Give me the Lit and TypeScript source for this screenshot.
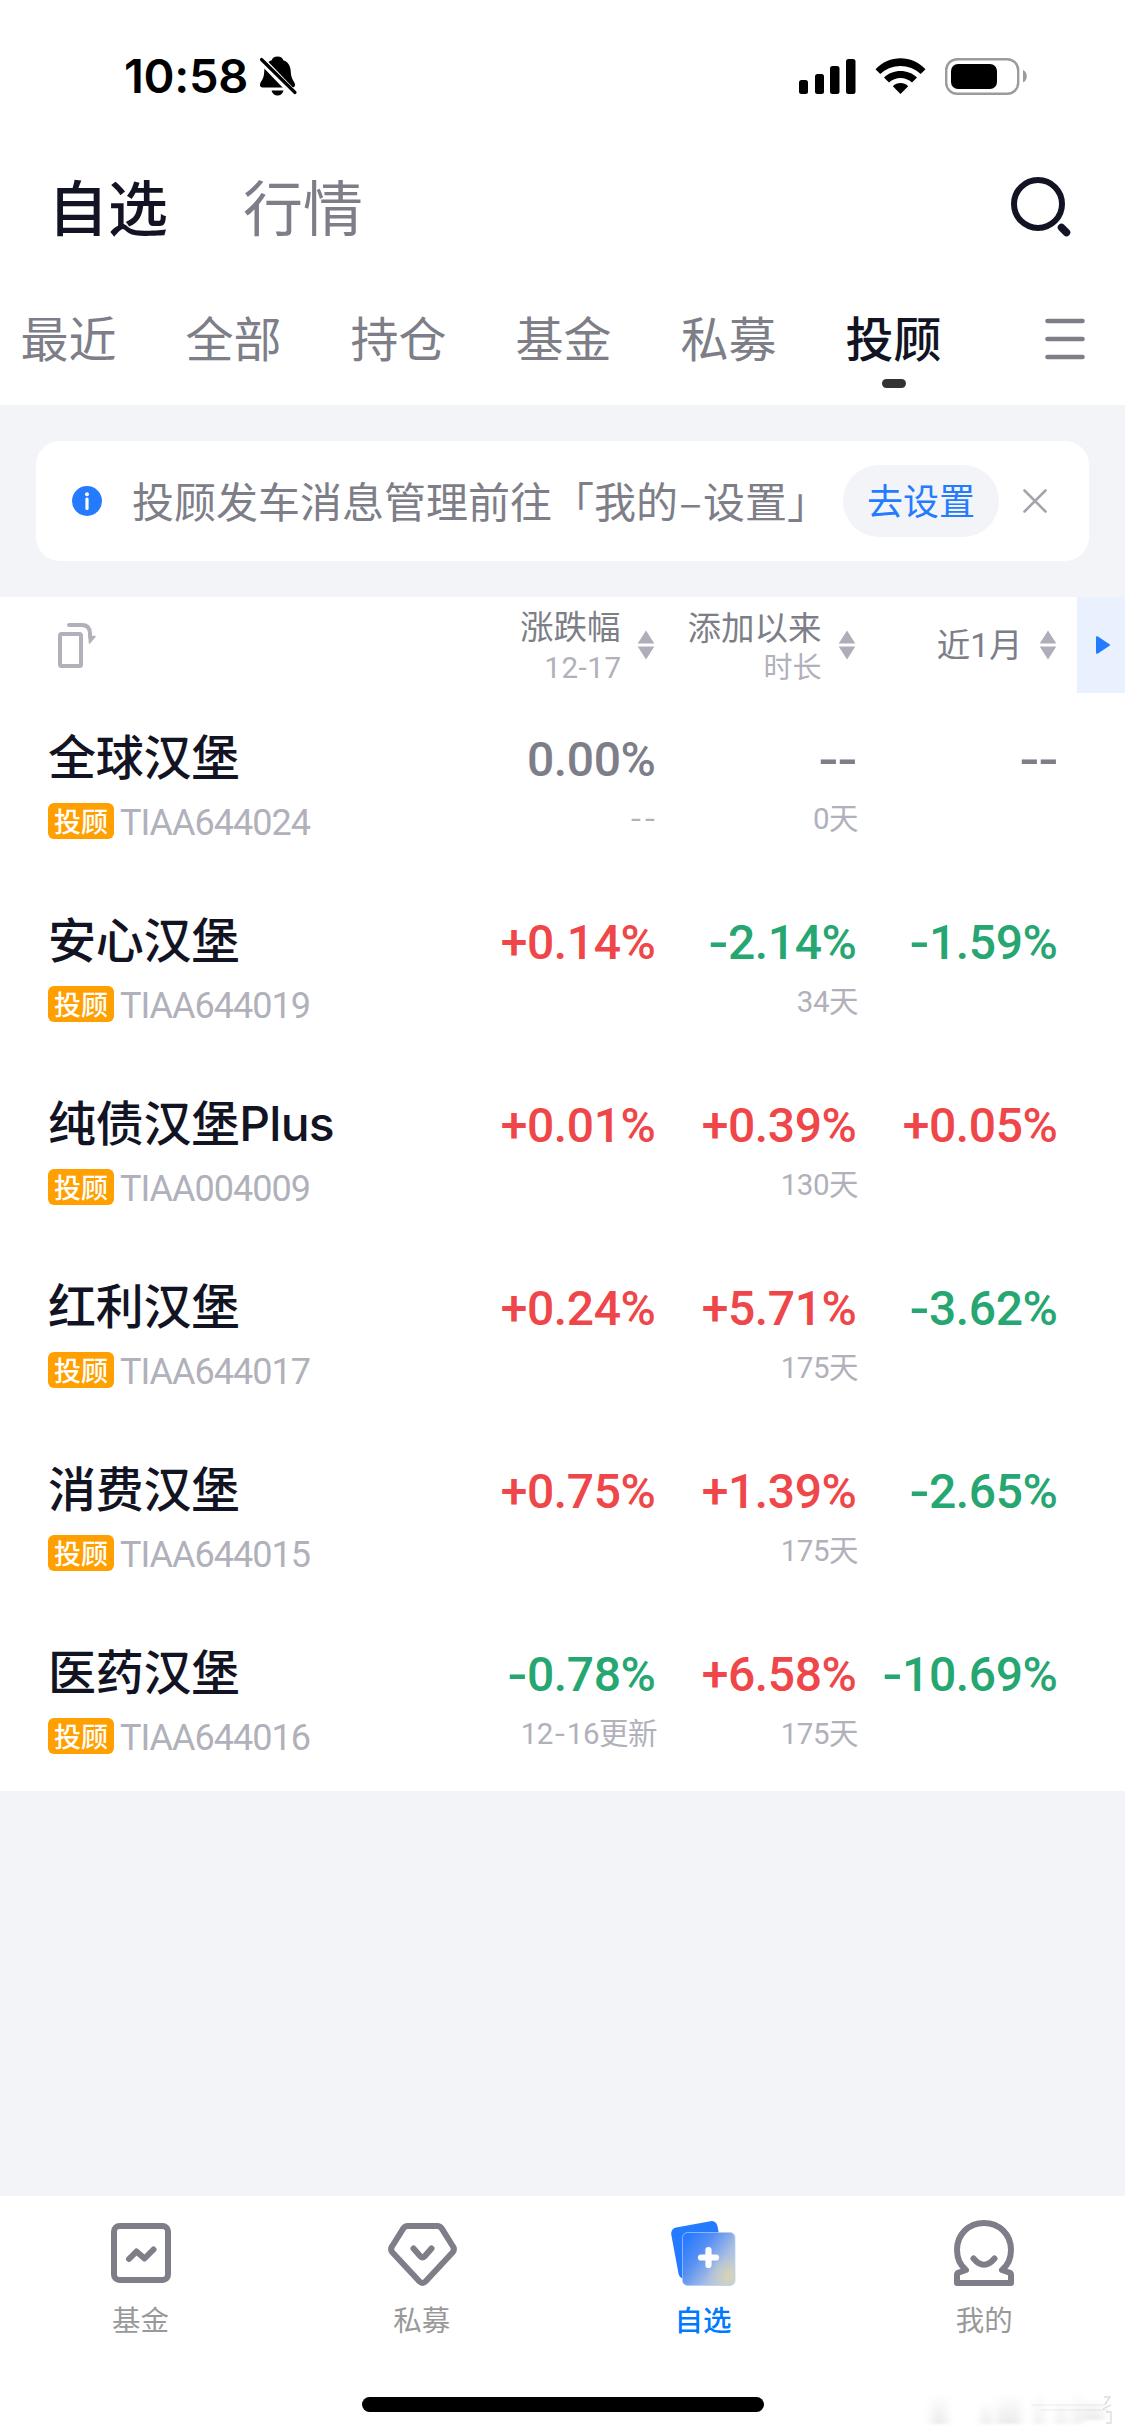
import { LitElement, html, css } from "lit";
import { customElement, property } from "lit/decorators.js";

type Tone = "flat" | "up" | "down";
interface Cell { value: string; tone: Tone; note: string; }
interface Fund { name: string; code: string; cells: Cell[]; }

const cell = (value: string, note = ""): Cell => ({
  value,
  note,
  tone: value.startsWith("+") ? "up" : /^-\d/.test(value) ? "down" : "flat",
});

const FUNDS: Fund[] = [
  { name: "全球汉堡", code: "TIAA644024", cells: [cell("0.00%", "--"), cell("--", "0天"), cell("--")] },
  { name: "安心汉堡", code: "TIAA644019", cells: [cell("+0.14%"), cell("-2.14%", "34天"), cell("-1.59%")] },
  { name: "纯债汉堡Plus", code: "TIAA004009", cells: [cell("+0.01%"), cell("+0.39%", "130天"), cell("+0.05%")] },
  { name: "红利汉堡", code: "TIAA644017", cells: [cell("+0.24%"), cell("+5.71%", "175天"), cell("-3.62%")] },
  { name: "消费汉堡", code: "TIAA644015", cells: [cell("+0.75%"), cell("+1.39%", "175天"), cell("-2.65%")] },
  { name: "医药汉堡", code: "TIAA644016", cells: [cell("-0.78%", "12-16更新"), cell("+6.58%", "175天"), cell("-10.69%")] },
];

// Hyphens get their own span so they can be drawn wider than the font's own.
const figures = (text: string) =>
  text.split(/(-)/).filter(Boolean).map((part) => (part === "-" ? html`<span class="hy">-</span>` : part));

@customElement("status-bar")
class StatusBar extends LitElement {
  static styles = css`
    :host { display: flex; height: 150px; box-sizing: border-box; padding: 2px 97px 0 124px; align-items: center; }
    .time { font: 600 47px/60px Inter, "Liberation Sans", sans-serif; letter-spacing: -0.3px; color: #000; width: 134px; white-space: nowrap; }
    svg { display: block; }
    .right { margin-left: auto; display: flex; gap: 19px; }
  `;
  render() {
    return html`
      <div class="time">10:58</div>
      <svg width="42" height="44" viewBox="258 55 42 44">
        <path d="M277.500 57.500c-3.200 0-5.200 1.500-5.800 3.700-5.300 2-7.200 6-7.500 11.800-.3 8-4.200 9.500-4.200 13 0 1.500 1 2.500 2.700 2.500h29.600c1.700 0 2.700-1 2.700-2.500 0-3.500-3.900-5-4.200-13-.3-5.800-2.200-9.800-7.500-11.800-.6-2.200-2.600-3.700-5.800-3.700z" fill="#000"/>
        <path d="M271.500 91.500h12c-1 3.300-3 5-6 5s-5-1.700-6-5z" fill="#000"/>
        <path d="M258 57.500L296 97" stroke="#fff" stroke-width="7.500"/>
        <path d="M261.500 60.500L295 93.500" stroke="#000" stroke-width="3.200" stroke-linecap="round"/>
      </svg>
      <div class="right">
        <svg width="57" height="38" viewBox="799 56 57 38">
          <rect x="799" y="79" width="9" height="14" rx="2.500"/><rect x="815" y="73" width="9" height="20" rx="2.500"/>
          <rect x="830" y="65" width="9.500" height="28" rx="2.500"/><rect x="846" y="58" width="9.500" height="35" rx="2.500"/>
        </svg>
        <svg width="51" height="38" viewBox="875 56 51 38">
          <path d="M875.500 68.200C889 53.600 912 53.600 925.500 68.200L920.700 73C909.700 62.200 891.300 62.200 880.300 73Z"/>
          <path d="M884 76.500C892.500 67.800 908.500 67.800 917 76.500L912 81.500C905.500 75.500 895.500 75.500 889 81.500Z"/>
          <path d="M892.800 85.200C897 81 904 81 908.200 85.200L900.500 93Z"/>
        </svg>
        <svg width="83" height="38" viewBox="945 56 83 38">
          <rect x="946.200" y="58.200" width="72" height="34.600" rx="11" fill="none" stroke="#9b9b9b" stroke-width="2.400"/>
          <rect x="951" y="63" width="46" height="25" rx="7"/>
          <path d="M1023 69c5 2 5 10.500 0 12.500z" fill="#9b9b9b"/>
        </svg>
      </div>`;
  }
}

@customElement("page-header")
class PageHeader extends LitElement {
  static styles = css`
    :host { display: block; font-family: "Noto Sans CJK SC", sans-serif; color: #7d7e88; }
    .titles { display: flex; align-items: center; height: 110px; padding: 0 54px 0 48px; gap: 75px; font-size: 60px; line-height: 80px; }
    .on { color: #121424; font-weight: 500; }
    .search { margin-left: auto; margin-top: 2px; }
    svg { display: block; }
    .tabs { display: flex; height: 145px; padding: 41px 40px 0 20.500px; gap: 69px; font-size: 48px; line-height: 70px; box-sizing: border-box; }
    .tab { width: 96px; display: flex; flex-direction: column; align-items: center; white-space: nowrap; }
    .bar { width: 24px; height: 9px; border-radius: 4.500px; background: #333; margin-top: 8px; }
    .menu { margin-left: auto; margin-top: 17px; }
  `;
  render() {
    return html`
      <div class="titles">
        <span class="on">自选</span><span>行情</span>
        <svg class="search" width="62" height="62" viewBox="1009 175 62 62" fill="none" stroke="#121424">
          <circle cx="1038" cy="204" r="24" stroke-width="6"/><path d="M1061.500 227.500l5 5" stroke-width="7.500" stroke-linecap="round"/>
        </svg>
      </div>
      <div class="tabs">
        ${["最近", "全部", "持仓", "基金", "私募"].map((t) => html`<div class="tab">${t}</div>`)}
        <div class="tab on">投顾<div class="bar"></div></div>
        <svg class="menu" width="40" height="42" viewBox="0 0 40 42" stroke="#7d7e88" stroke-width="4.600" stroke-linecap="round">
          <path d="M2.500 3H37.500M2.500 21H37.500M2.500 39H37.500"/>
        </svg>
      </div>`;
  }
}

@customElement("notice-card")
class NoticeCard extends LitElement {
  static styles = css`
    :host { display: block; background: #f3f4f8; padding: 36px; font-family: "Noto Sans CJK SC", sans-serif; }
    .card { display: flex; align-items: center; height: 120px; border-radius: 24px; background: #fff; box-sizing: border-box; padding: 0 42px 0 36px; }
    svg { display: block; flex: none; }
    .text { margin-left: 30px; font-size: 42px; line-height: 60px; color: #7d7e88; white-space: nowrap; width: 711px; padding-bottom: 3px; }
    .dash { display: inline-block; width: 25px; text-align: center; }
    .btn { width: 156px; height: 72px; border-radius: 36px; background: #f3f4f8; color: #257bff; font-size: 36px; line-height: 69px; text-align: center; flex: none; }
    .close { margin-left: auto; }
  `;
  render() {
    return html`<div class="card">
      <svg width="30" height="30" viewBox="0 0 30 30"><circle cx="15" cy="15" r="15" fill="#257bff"/><circle cx="15" cy="8.200" r="2" fill="#fff"/><path d="M15 13v9.500" stroke="#fff" stroke-width="3.200" stroke-linecap="round"/></svg>
      <div class="text">投顾发车消息管理前往「我的<span class="dash">–</span>设置」</div>
      <div class="btn">去设置</div>
      <svg class="close" width="24" height="24" viewBox="0 0 24 24" stroke="#a3a4ad" stroke-width="2.600" stroke-linecap="round"><path d="M1.500 1.500L22.500 22.500M22.500 1.500L1.500 22.500"/></svg>
    </div>`;
  }
}

@customElement("fund-row")
class FundRow extends LitElement {
  @property({ attribute: false }) fund!: Fund;
  static styles = css`
    :host { display: grid; grid-template-columns: 407px 201px 201px 201px; height: 183px; box-sizing: border-box; padding: 26px 0 0 48px; font-family: Roboto, "Noto Sans CJK SC", sans-serif; }
    .name { font: 500 48px/70px Inter, "Noto Sans CJK SC", sans-serif; letter-spacing: -0.7px; color: #121424; white-space: nowrap; }
    .cjk { font-family: "Noto Sans CJK SC", sans-serif; letter-spacing: -0.2px; }
    .meta { display: flex; align-items: center; gap: 6px; height: 36px; margin-top: 10px; }
    .badge { width: 66px; height: 36px; border-radius: 6px; background: #ffa000; color: #fff; font: 500 27px/35px "Noto Sans CJK SC", sans-serif; text-align: center; }
    .code { font-size: 36px; line-height: 36px; letter-spacing: -1px; color: #b0b1bb; padding-top: 3px; }
    .cell { display: flex; flex-direction: column; align-items: flex-end; white-space: nowrap; }
    .value { font-weight: 500; font-size: 48px; line-height: 60px; letter-spacing: -0.4px; margin-top: 11px; padding-right: 0.5px; }
    .flat { color: #7d7e88; } .up { color: #ee4649; } .down { color: #26a671; }
    .note { font-size: 29.500px; line-height: 36px; letter-spacing: -0.5px; color: #b0b1bb; margin-top: 11px; margin-right: -1px; }
    .hy { display: inline-block; width: 19px; text-align: center; transform: scaleX(1.22); letter-spacing: 0; }
    .note .hy { width: 14px; }
  `;
  render() {
    const { name, code, cells } = this.fund;
    return html`
      <div>
        <div class="name"><span class="cjk">${name.slice(0, 4)}</span>${name.slice(4)}</div>
        <div class="meta"><span class="badge">投顾</span><span class="code">${code}</span></div>
      </div>
      ${cells.map((c) => html`<div class="cell"><div class="value ${c.tone}">${figures(c.value)}</div><div class="note">${figures(c.note)}</div></div>`)}`;
  }
}

@customElement("fund-table")
class FundTable extends LitElement {
  static styles = css`
    :host { display: block; background: #fff; font-family: Roboto, "Noto Sans CJK SC", sans-serif; }
    .head { display: flex; height: 96px; align-items: center; padding-left: 57px; }
    .head svg { display: block; flex: none; }
    .cols { display: grid; grid-template-columns: 201px 201px 201px; margin-left: 357px; flex: none; }
    .col { display: flex; align-items: center; justify-content: flex-end; gap: 16.500px; height: 97px; }
    .lab { text-align: right; white-space: nowrap; font-size: 33.500px; line-height: 40px; color: #7d7e88; padding-top: 5px; }
    .one { padding-top: 2px; }
    .sub { font-size: 29px; line-height: 38px; color: #b0b1bb; }
    .num { font-size: 29.500px; letter-spacing: 0.6px; margin-right: -1.200px; padding-top: 1px; }
    .more { width: 48px; height: 96px; background: #e9f1fe; margin-left: auto; display: flex; align-items: center; justify-content: center; box-sizing: border-box; padding-left: 3px; }
  `;
  sorter = () => html`<svg width="18" height="30" viewBox="0 0 18 30" fill="#adaeb9"><path d="M9 0.500L17.300 13.500H0.700ZM9 29.500L17.300 16.500H0.700Z"/></svg>`;
  render() {
    return html`
      <div class="head">
        <svg width="40" height="46" viewBox="57 621 40 46" fill="none" stroke="#b0b1bb" stroke-width="4" stroke-linejoin="round" stroke-linecap="round">
          <rect x="60" y="633" width="21" height="32" rx="1.500"/><path d="M69 624H82Q89.500 624 90 632V636"/><path d="M89 635.500h6l-5.500 6.500z" fill="#b0b1bb" stroke-width="1.500"/>
        </svg>
        <div class="cols">
          <div class="col"><div class="lab">涨跌幅<div class="sub num">12-17</div></div>${this.sorter()}</div>
          <div class="col"><div class="lab">添加以来<div class="sub">时长</div></div>${this.sorter()}</div>
          <div class="col"><div class="lab one">近1月</div>${this.sorter()}</div>
        </div>
        <div class="more"><svg width="18" height="20" viewBox="0 0 18 20"><path d="M3 2.200L15 10L3 17.800Z" fill="#257bff" stroke="#257bff" stroke-width="2" stroke-linejoin="round"/></svg></div>
      </div>
      ${FUNDS.map((f) => html`<fund-row .fund=${f}></fund-row>`)}`;
  }
}

@customElement("nav-bar")
class NavBar extends LitElement {
  static styles = css`
    :host { display: block; height: 240px; background: #fff; position: relative; box-sizing: border-box; padding-top: 19px; font-family: "Noto Sans CJK SC", sans-serif; }
    .items { display: grid; grid-template-columns: repeat(4, 1fr); }
    .item { display: flex; flex-direction: column; align-items: center; font-size: 28.500px; line-height: 42px; color: #999; height: 182px; gap: 8px; }
    .active { color: #007aff; font-weight: 500; }
    svg { display: block; width: 70px; height: 75px; }
    .home { width: 402px; height: 15px; border-radius: 8px; background: #000; margin: 0 auto; }
    .smudge { position: absolute; right: 8px; bottom: 6px; width: 196px; height: 44px; }
  `;
  render() {
    return html`
      <div class="items">
        <div class="item">
          <svg viewBox="106 2215 70 75" fill="none" stroke="#7d7e88" stroke-width="6" stroke-linecap="round" stroke-linejoin="round">
            <rect x="114" y="2226" width="54" height="54" rx="5.500"/><path d="M129 2259l7.500-7.500 8 7 9-9"/></svg>基金</div>
        <div class="item">
          <svg viewBox="387.500 2215 70 75" fill="none" stroke="#7d7e88" stroke-width="6" stroke-linecap="round" stroke-linejoin="round">
            <path d="M408 2226H438Q440.500 2226 442 2228.200L453.500 2246.500Q455.500 2249.500 453 2252.500L426 2281.500Q423 2284.500 420 2281.500L393 2252.500Q390.500 2249.500 392.500 2246.500L404 2228.200Q405.500 2226 408 2226Z"/><path d="M414 2248.500l7 8q2 2 4 0l7-8"/></svg>私募</div>
        <div class="item active">
          <svg viewBox="668.500 2215 70 75">
            <defs>
              <linearGradient id="g" x1="0" y1="0" x2="1" y2=".75"><stop offset=".1" stop-color="#2a7bfd"/><stop offset=".4" stop-color="#568ff3"/><stop offset=".75" stop-color="#a9bfe2"/><stop offset="1" stop-color="#c3ccd4"/></linearGradient>
              <radialGradient id="y" cx=".88" cy=".82" r=".42"><stop offset="0" stop-color="#e0d9a8" stop-opacity=".7"/><stop offset="1" stop-color="#d6d4b6" stop-opacity="0"/></radialGradient>
            </defs>
            <rect x="675" y="2224" width="47" height="52" rx="6" transform="rotate(-10.500 698 2250)" fill="#257bff"/>
            <rect x="683" y="2232.500" width="52.500" height="53" rx="5" fill="url(#g)"/>
            <rect x="683" y="2232.500" width="52.500" height="53" rx="5" fill="url(#y)" stroke="#b4cdf8" stroke-opacity=".7"/>
            <path d="M709 2250v15M701.500 2257.500h15" stroke="#fff" stroke-width="6.200" stroke-linecap="round"/></svg>自选</div>
        <div class="item">
          <svg viewBox="949 2215 70 75" fill="none" stroke="#7d7e88" stroke-width="6" stroke-linecap="round" stroke-linejoin="round">
            <path d="M966 2270C960 2265 957 2258 957 2250C957 2234 969 2223 984 2223C999 2223 1011 2234 1011 2250C1011 2258 1008 2265 1002 2270L1009 2272.500Q1011 2273 1011 2275V2283H957V2275Q957 2273 959 2272.500Z"/><path d="M973.500 2258.500Q984 2271 994.500 2258.500"/></svg>我的</div>
      </div>
      <div class="home"></div>
      <svg class="smudge" viewBox="0 0 196 44">
        <defs>
          <filter id="soft" x="-20%" y="-20%" width="140%" height="140%"><feGaussianBlur stdDeviation="4 1.500"/></filter>
          <linearGradient id="fade" x1="0" y1="0" x2="0" y2="1"><stop offset="0" stop-color="#000" stop-opacity="0"/><stop offset="1" stop-color="#000" stop-opacity=".08"/></linearGradient>
        </defs>
        <g filter="url(#soft)" fill="url(#fade)">
          <rect x="10" y="8" width="16" height="30"/><rect x="60" y="14" width="10" height="24"/><rect x="76" y="8" width="24" height="30"/>
          <rect x="114" y="6" width="8" height="32"/><rect x="136" y="12" width="8" height="26"/><rect x="152" y="6" width="8" height="32"/><rect x="162" y="12" width="20" height="22"/>
        </g>
        <path d="M110 19H186M120 24H188" stroke="#000" stroke-opacity=".035" stroke-width="2"/>
        <path d="M183 11h6l-5 7M182 23l8-4M185 26h5v11h-5" fill="none" stroke="#000" stroke-opacity=".14" stroke-width="1.300"/>
      </svg>`;
  }
}

@customElement("app-root")
class AppRoot extends LitElement {
  static styles = css`
    :host { display: flex; flex-direction: column; width: 1125px; height: 2436px; background: #fff; overflow: hidden; }
    .fill { flex: 1; background: #f3f4f8; }
  `;
  render() {
    return html`<status-bar></status-bar><page-header></page-header><notice-card></notice-card><fund-table></fund-table><div class="fill"></div><nav-bar></nav-bar>`;
  }
}
